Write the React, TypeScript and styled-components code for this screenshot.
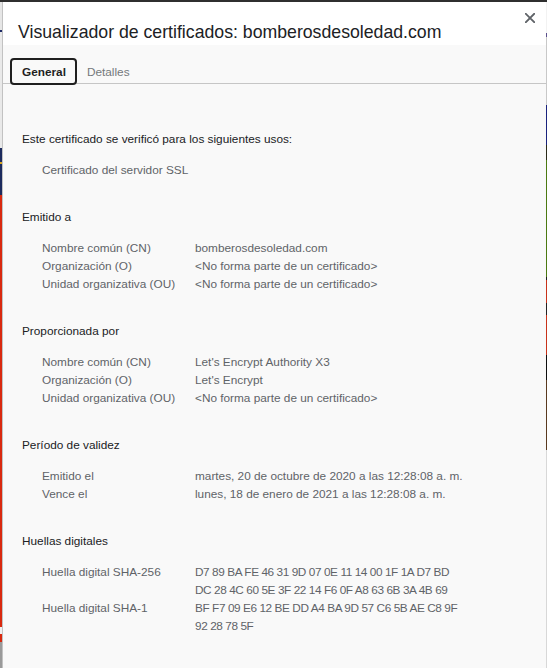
import React from "react";
import styled, { createGlobalStyle } from "styled-components";

const GlobalStyle = createGlobalStyle`
  html, body { margin: 0; padding: 0; height: 100%; }
  body {
    font-family: "Liberation Sans", Arial, sans-serif;
    background: #2b2b2b;
    overflow: hidden;
  }
  #root { height: 100%; }
`;

const Screen = styled.div`
  display: grid;
  grid-template-columns: 2px 1fr 1px;
  grid-template-rows: 2px 1fr;
  width: 547px;
  height: 668px;
`;

const TopEdge = styled.div`
  grid-column: 1 / -1;
  background: #2f2f2f;
`;

const SideEdge = styled.div<{ $bg: string }>`
  background: ${(p) => p.$bg};
`;

const leftBg = `linear-gradient(to bottom,
  #e6e6e6 0px, #e6e6e6 28px, #1d2a66 28px, #1d2a66 30px,
  #e9e9e9 30px, #e9e9e9 146px,
  #1c2b5e 146px, #1c2b5e 160px, #d6a520 160px, #d6a520 162px,
  #1c2b5e 162px, #1c2b5e 193px,
  #d9290f 193px, #d9290f 625px, #f0f0f0 625px, #f0f0f0 632px,
  #d9290f 632px, #d9290f 640px, #9a9a9a 640px, #9a9a9a 666px)`;

const rightBg = `linear-gradient(to bottom,
  #f2f2f2 0px, #f2f2f2 31px, #5a4f8c 31px, #5a4f8c 35px,
  #c8c8c8 35px, #c8c8c8 103px,
  #1a237e 103px, #1a237e 143px, #2a2a1a 143px, #2a2a1a 158px,
  #4c7a12 158px, #4c7a12 275px, #1d1d1d 275px, #1d1d1d 278px,
  #c8321a 278px, #c8321a 301px, #262222 301px, #262222 313px,
  #c8321a 313px, #c8321a 353px, #0f0f0f 353px, #0f0f0f 378px,
  #5a3a20 378px, #5a3a20 448px, #d8d8d8 448px, #d8d8d8 666px)`;

const Dialog = styled.div`
  display: flex;
  flex-direction: column;
  min-width: 0;
  overflow: hidden;
  background: #f9f9f9;
  border-left: 1px solid #c2c2c2;
`;

const Header = styled.div`
  display: flex;
  align-items: flex-start;
  box-sizing: border-box;
  height: 43px;
  padding: 0 11px 0 15px;
  background: #ffffff;
`;

const Title = styled.h1`
  margin: 0;
  padding-top: 18px;
  font-size: 17.7px;
  line-height: 24px;
  font-weight: 400;
  color: #202124;
  white-space: nowrap;
`;

const CloseButton = styled.button`
  margin-left: auto;
  margin-top: 11px;
  width: 10px;
  height: 10px;
  padding: 0;
  border: 0;
  background: none;
  color: #5f6368;
  display: flex;
  cursor: pointer;
`;

const TabBar = styled.div`
  display: flex;
  align-items: flex-start;
  box-sizing: border-box;
  height: 39px;
  padding: 13px 0 0 7px;
  border-bottom: 1px solid #c6c6c6;
`;

const Tab = styled.div<{ $active?: boolean }>`
  display: flex;
  align-items: center;
  box-sizing: border-box;
  height: 27px;
  padding: 0 9px 0 10px;
  border: 2px solid ${(p) => (p.$active ? "#1f1f1f" : "transparent")};
  border-radius: 4px;
  font-size: 11.8px;
  font-weight: ${(p) => (p.$active ? 700 : 400)};
  color: ${(p) => (p.$active ? "#1f1f1f" : "#74787c")};
  & + & { margin-left: -2px; }
`;

const Content = styled.div`
  padding: 46px 19px 0 19px;
  font-size: 11.8px;
  line-height: 18px;
`;

const Section = styled.section`
  margin-bottom: 29px;
`;

const Heading = styled.div`
  color: #202124;
  margin-bottom: 13px;
  white-space: nowrap;
`;

const Item = styled.div`
  padding-left: 20px;
  color: #5f6368;
`;

const Rows = styled.div`
  display: grid;
  grid-template-columns: 153px 1fr;
  padding-left: 20px;
  color: #5f6368;
  white-space: nowrap;
`;

const Label = styled.div``;

const Value = styled.div<{ $tight?: boolean }>`
  letter-spacing: ${(p) => (p.$tight ? "-0.42px" : "normal")};
`;

type Field = [string, string[], boolean?];

const sections: { title: string; fields: Field[] }[] = [
  {
    title: "Emitido a",
    fields: [
      ["Nombre común (CN)", ["bomberosdesoledad.com"]],
      ["Organización (O)", ["<No forma parte de un certificado>"]],
      ["Unidad organizativa (OU)", ["<No forma parte de un certificado>"]],
    ],
  },
  {
    title: "Proporcionada por",
    fields: [
      ["Nombre común (CN)", ["Let's Encrypt Authority X3"]],
      ["Organización (O)", ["Let's Encrypt"]],
      ["Unidad organizativa (OU)", ["<No forma parte de un certificado>"]],
    ],
  },
  {
    title: "Período de validez",
    fields: [
      ["Emitido el", ["martes, 20 de octubre de 2020 a las 12:28:08 a. m."]],
      ["Vence el", ["lunes, 18 de enero de 2021 a las 12:28:08 a. m."]],
    ],
  },
  {
    title: "Huellas digitales",
    fields: [
      [
        "Huella digital SHA-256",
        [
          "D7 89 BA FE 46 31 9D 07 0E 11 14 00 1F 1A D7 BD",
          "DC 28 4C 60 5E 3F 22 14 F6 0F A8 63 6B 3A 4B 69",
        ],
        true,
      ],
      [
        "Huella digital SHA-1",
        ["BF F7 09 E6 12 BE DD A4 BA 9D 57 C6 5B AE C8 9F", "92 28 78 5F"],
        true,
      ],
    ],
  },
];

export default function App() {
  return (
    <>
      <GlobalStyle />
      <Screen>
        <TopEdge />
        <SideEdge $bg={leftBg} />
        <Dialog>
          <Header>
            <Title>Visualizador de certificados: bomberosdesoledad.com</Title>
            <CloseButton aria-label="Cerrar">
              <svg width="10" height="10" viewBox="0 0 10 10">
                <path
                  d="M0.8 0.8 L9.2 9.2 M9.2 0.8 L0.8 9.2"
                  stroke="currentColor"
                  strokeWidth="1.9"
                  strokeLinecap="square"
                  fill="none"
                />
              </svg>
            </CloseButton>
          </Header>
          <TabBar>
            <Tab $active>General</Tab>
            <Tab>Detalles</Tab>
          </TabBar>
          <Content>
            <Section>
              <Heading>Este certificado se verificó para los siguientes usos:</Heading>
              <Item>Certificado del servidor SSL</Item>
            </Section>
            {sections.map((s) => (
              <Section key={s.title}>
                <Heading>{s.title}</Heading>
                <Rows>
                  {s.fields.map(([label, lines, tight]) => (
                    <React.Fragment key={label}>
                      <Label>{label}</Label>
                      <Value $tight={tight}>
                        {lines.map((l, i) => (
                          <div key={i}>{l}</div>
                        ))}
                      </Value>
                    </React.Fragment>
                  ))}
                </Rows>
              </Section>
            ))}
          </Content>
        </Dialog>
        <SideEdge $bg={rightBg} />
      </Screen>
    </>
  );
}
